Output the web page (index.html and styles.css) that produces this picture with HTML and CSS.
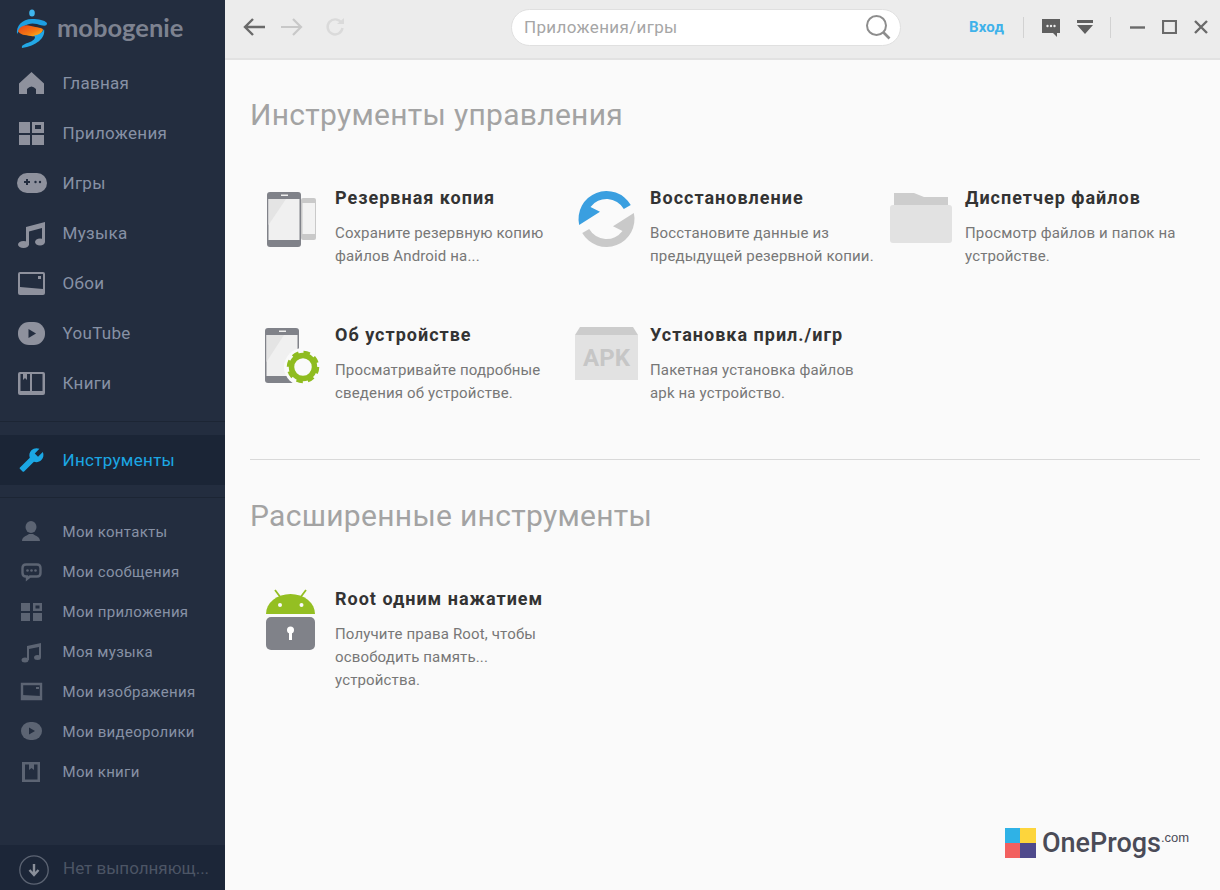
FILE: index.html
```html
<!DOCTYPE html>
<html lang="ru">
<head>
    <meta charset="UTF-8">
    <title>Mobogenie</title>
    <link rel="stylesheet" href="styles.css">
</head>
<body>
<div class="app">
    <aside class="sidebar">
        <div class="logo">
            <svg class="logo-mark" width="34" height="42" viewBox="0 0 34 42">
                <defs>
                    <linearGradient id="fire" x1="0" y1="0" x2="1" y2="1">
                        <stop offset="0" stop-color="#e8401c"/>
                        <stop offset="0.6" stop-color="#f57a12"/>
                        <stop offset="1" stop-color="#fbc31c"/>
                    </linearGradient>
                </defs>
                <ellipse cx="16" cy="5" rx="2.800" ry="3.600" fill="#3fb6ee"/>
                <path d="M1 26C0 18 6 11 16 11 23 11 28 12 31 15 31 19 27 18 21 16 13 14 7 17 1 26Z" fill="#1d9fe2"/>
                <path d="M2 23C4 18 9 16 15 18 21 20 27 19 27 22 25 27 20 29 15 28 9 27 4 27 2 23Z" fill="url(#fire)"/>
                <path d="M6 40C5 37 9 36 14 34 19 32 20 29 18 27.500 23 27 27 24 28 21 30 30 20 38 6 40Z" fill="#23a8e6"/>
            </svg>
            <span class="logo-text">mobogenie</span>
        </div>

        <nav class="nav">
            <a class="nav-item">
                <svg class="nav-icon" viewBox="0 0 30 30"><path d="M14.500 4 27 15.500V26H19V21Q14.500 16 10 21V26H2V15.500Z"/></svg>
                Главная
            </a>
            <a class="nav-item">
                <svg class="nav-icon" viewBox="0 0 30 30"><path d="M2 4H13V15H2ZM2 17H13V27H2ZM15 17H27V27H15Z"/><path fill-rule="evenodd" d="M15 4H27V15H15ZM18 7V11H24V7Z"/></svg>
                Приложения
            </a>
            <a class="nav-item">
                <svg class="nav-icon" viewBox="0 0 30 30"><rect y="5" width="30" height="20" rx="10"/><path class="cut" d="M7 13H9V11H11V13H13V15H11V17H9V15H7Z"/><circle class="cut" cx="18.500" cy="14" r="1.200"/><circle class="cut" cx="23" cy="14" r="1.200"/></svg>
                Игры
            </a>
            <a class="nav-item">
                <svg class="nav-icon" viewBox="0 0 30 30"><path d="M9 9 28 4V24H25V10L12 13.500V27H9Z"/><ellipse cx="6.500" cy="26.500" rx="5.500" ry="3.500"/><ellipse cx="23" cy="24" rx="5" ry="3.500"/></svg>
                Музыка
            </a>
            <a class="nav-item">
                <svg class="nav-icon" viewBox="0 0 30 30"><rect x="1" y="4" width="27" height="23" rx="2"/><path class="cut" d="M3 6H26V21L3 19Z"/><rect x="21" y="8" width="3" height="3"/></svg>
                Обои
            </a>
            <a class="nav-item">
                <svg class="nav-icon" viewBox="0 0 30 30"><rect x="1" y="4" width="27" height="23" rx="11"/><path class="cut" d="M11.500 11 19 15.500 11.500 20Z"/></svg>
                YouTube
            </a>
            <a class="nav-item">
                <svg class="nav-icon" viewBox="0 0 30 30"><rect x="1" y="4" width="27" height="23" rx="2"/><path class="cut" d="M3.500 6H6V12L8 10 10 12V6H13V23H3.500ZM15 6H25.500V23H15Z"/></svg>
                Книги
            </a>
        </nav>

        <div class="active-wrap">
            <a class="nav-item nav-item-active">
                <svg class="nav-icon" viewBox="0 0 30 30"><path transform="translate(27.500 2) scale(-1.08 1.08)" d="M22.700 19l-9.100-9.100c.9-2.300.4-5-1.500-6.900-2-2-5-2.400-7.400-1.300L9 6 6 9 1.600 4.700C.4 7.100.9 10.100 2.900 12.100c1.900 1.900 4.600 2.400 6.900 1.500l9.100 9.100c.4.4 1 .4 1.400 0l2.300-2.300c.5-.4.5-1.100.1-1.400z"/></svg>
                Инструменты
            </a>
        </div>

        <nav class="subnav">
            <a class="sub-item">
                <svg class="sub-icon" viewBox="0 0 30 30"><ellipse cx="14" cy="11" rx="5.500" ry="6"/><path d="M5 25C5 21 9 20 12 18H16C19 20 23 21 23 25Z"/></svg>
                Мои контакты
            </a>
            <a class="sub-item">
                <svg class="sub-icon" viewBox="0 0 30 30"><path class="line" d="M9 8.500H20Q23.500 8.500 23.500 12V17Q23.500 20.500 20 20.500H13L10 23V20.500H9Q5.500 20.500 5.500 17V12Q5.500 8.500 9 8.500Z"/><circle cx="10.500" cy="14.500" r="1.300"/><circle cx="14.500" cy="14.500" r="1.300"/><circle cx="18.500" cy="14.500" r="1.300"/></svg>
                Мои сообщения
            </a>
            <a class="sub-item">
                <svg class="sub-icon" viewBox="0 0 30 30"><path d="M4 7H13V15H4ZM4 17H13V25H4ZM16 17H25V25H16Z"/><path fill-rule="evenodd" d="M16 7H25V15H16ZM18.500 9.500V12.500H22.500V9.500Z"/></svg>
                Мои приложения
            </a>
            <a class="sub-item">
                <svg class="sub-icon" viewBox="0 0 30 30"><path d="M10 10 24 7V21H22V11L12 13V24H10Z"/><ellipse cx="8" cy="24" rx="3.500" ry="2.500"/><ellipse cx="20.500" cy="21.500" rx="3.500" ry="2.500"/></svg>
                Моя музыка
            </a>
            <a class="sub-item">
                <svg class="sub-icon" viewBox="0 0 30 30"><path class="line" d="M5 8H24V23H5Z"/><path d="M5 19 24 20V23H5ZM19 11H22V13H19Z"/></svg>
                Мои изображения
            </a>
            <a class="sub-item">
                <svg class="sub-icon" viewBox="0 0 30 30"><rect x="4" y="6" width="21" height="18" rx="9"/><path class="cut" d="M12 11.500 18 15 12 18.500Z"/></svg>
                Мои видеоролики
            </a>
            <a class="sub-item">
                <svg class="sub-icon" viewBox="0 0 30 30"><path fill-rule="evenodd" d="M5 6H23V26H5ZM8 8.500V23.500H20.500V8.500H17V14L14.500 12 12 14V8.500Z"/></svg>
                Мои книги
            </a>
        </nav>

        <div class="tasks">
            <svg class="tasks-icon" width="30" height="30" viewBox="0 0 30 30">
                <circle cx="15" cy="15" r="14.200" fill="none" stroke="#5c6473" stroke-width="1.300"/>
                <path d="M15 9V19M10.500 15 15 20 19.500 15" fill="none" stroke="#8a8f9a" stroke-width="2.400"/>
            </svg>
            <span class="tasks-text">Нет выполняющ...</span>
        </div>
    </aside>

    <main class="main">
        <header class="toolbar">
            <svg class="tb-icon" width="22" height="20" viewBox="0 0 22 20"><path d="M22 10H2M10 2 2 10 10 18" fill="none" stroke="#6a6a6a" stroke-width="2.400"/></svg>
            <svg class="tb-icon tb-forward" width="22" height="20" viewBox="0 0 22 20"><path d="M0 10H20M12 2 20 10 12 18" fill="none" stroke="#c8c8c8" stroke-width="2.200"/></svg>
            <svg class="tb-icon tb-reload" width="20" height="20" viewBox="0 0 20 20"><path d="M16.500 6A7.500 7.500 0 1 0 17.500 11" fill="none" stroke="#dadada" stroke-width="2.400"/><path d="M12 7H19V1Z" fill="#dadada"/></svg>

            <div class="search">
                <span class="search-text">Приложения/игры</span>
                <svg width="26" height="26" viewBox="0 0 26 26"><circle cx="11.500" cy="11.500" r="9.500" fill="none" stroke="#8d8d8d" stroke-width="2"/><path d="M18.500 18.500 24.500 24.500" stroke="#8d8d8d" stroke-width="2.600"/></svg>
            </div>

            <a class="login">Вход</a>
            <span class="tb-sep"></span>
            <svg class="tb-chat" width="18" height="19" viewBox="0 0 18 19"><path d="M0 1H18V15H15V19L11 15H0Z" fill="#5f5f5f"/><circle cx="5.500" cy="8" r="1.200" fill="#eee"/><circle cx="9" cy="8" r="1.200" fill="#eee"/><circle cx="12.500" cy="8" r="1.200" fill="#eee"/></svg>
            <svg class="tb-menu" width="16" height="14" viewBox="0 0 16 14"><path d="M0 0H16V3H0ZM0 5H16L8 14Z" fill="#5f5f5f"/></svg>
            <span class="tb-sep tb-sep-2"></span>
            <svg class="tb-min" width="15" height="15" viewBox="0 0 15 15"><path d="M0 7.500H15" stroke="#6a6a6a" stroke-width="2.400"/></svg>
            <svg class="tb-max" width="15" height="14" viewBox="0 0 15 14"><path d="M1 1H14V13H1Z" fill="none" stroke="#6a6a6a" stroke-width="2.200"/></svg>
            <svg class="tb-close" width="14" height="14" viewBox="0 0 14 14"><path d="M1 1 13 13M13 1 1 13" stroke="#6a6a6a" stroke-width="2.400"/></svg>
        </header>

        <section class="section section-first">
            <h1 class="section-title">Инструменты управления</h1>
            <div class="tools">
                <div class="tool">
                    <svg class="tool-icon" viewBox="0 0 85 70">
                        <rect x="51" y="13" width="15" height="42" rx="2" fill="#c9c9c9"/>
                        <rect x="52.500" y="18" width="12.500" height="31" fill="#f2f2f2"/>
                        <rect x="17" y="7" width="34" height="55" rx="3" fill="#808289"/>
                        <path d="M18.500 14H49.500V55H18.500Z" fill="#f0f0f0"/>
                        <path d="M18.500 14H36L18.500 40Z" fill="#e4e4e4"/>
                        <rect x="31" y="9.500" width="7" height="1.500" fill="#eee"/>
                    </svg>
                    <div class="tool-body">
                        <h3 class="tool-name">Резервная копия</h3>
                        <p class="tool-desc">Сохраните резервную копию файлов Android на...</p>
                    </div>
                </div>
                <div class="tool">
                    <svg class="tool-icon" viewBox="0 0 85 70">
                        <path d="M14.150 40A28 28 0 0 1 65.750 20L58.800 24A20 20 0 0 0 25.500 22L35 26.700Z" fill="#3a9fe0"/>
                        <path d="M68.850 28A28 28 0 0 1 17.250 48L24.200 44A20 20 0 0 0 57.500 46L48 41.300Z" fill="#c9c9c9"/>
                    </svg>
                    <div class="tool-body">
                        <h3 class="tool-name">Восстановление</h3>
                        <p class="tool-desc">Восстановите данные из предыдущей резервной копии.</p>
                    </div>
                </div>
                <div class="tool">
                    <svg class="tool-icon" viewBox="0 0 85 70">
                        <path d="M14 8H34L44 12H68V22H14Z" fill="#cdcdcd"/>
                        <rect x="10" y="20" width="62" height="38" rx="3" fill="#e2e2e2"/>
                    </svg>
                    <div class="tool-body">
                        <h3 class="tool-name">Диспетчер файлов</h3>
                        <p class="tool-desc">Просмотр файлов и папок на устройстве.</p>
                    </div>
                </div>
                <div class="tool">
                    <svg class="tool-icon" viewBox="0 0 85 70">
                        <rect x="15" y="6" width="34" height="55" rx="3" fill="#808289"/>
                        <path d="M16.500 13H47.500V54H16.500Z" fill="#f0f0f0"/>
                        <path d="M16.500 13H34L16.500 40Z" fill="#e4e4e4"/>
                        <rect x="29" y="8.500" width="7" height="1.500" fill="#eee"/>
                        <circle cx="53" cy="45" r="19" fill="#fafafa"/>
                        <circle cx="53" cy="45" r="11.500" fill="none" stroke="#8fbc1f" stroke-width="5.500"/>
                        <circle cx="53" cy="45" r="14.500" fill="none" stroke="#8fbc1f" stroke-width="3.500" stroke-dasharray="6.400 5"/>
                    </svg>
                    <div class="tool-body">
                        <h3 class="tool-name">Об устройстве</h3>
                        <p class="tool-desc">Просматривайте подробные сведения об устройстве.</p>
                    </div>
                </div>
                <div class="tool">
                    <svg class="tool-icon" viewBox="0 0 85 70">
                        <path d="M15 5H68L73 13H10Z" fill="#cccccc"/>
                        <rect x="10" y="13" width="63" height="45" fill="#e2e2e2"/>
                        <text class="apk" x="41.500" y="44" text-anchor="middle">APK</text>
                    </svg>
                    <div class="tool-body">
                        <h3 class="tool-name">Установка прил./игр</h3>
                        <p class="tool-desc">Пакетная установка файлов apk на устройство.</p>
                    </div>
                </div>
            </div>
        </section>

        <section class="section">
            <h1 class="section-title">Расширенные инструменты</h1>
            <div class="tools">
                <div class="tool">
                    <svg class="tool-icon" viewBox="0 0 85 70">
                        <path d="M25 4 31 12M56 4 50 12" stroke="#94bf22" stroke-width="1.800"/>
                        <path d="M16 28A24.500 20 0 0 1 65 28Z" fill="#94bf22"/>
                        <circle cx="30" cy="19" r="2" fill="#fafafa"/>
                        <circle cx="51.500" cy="19" r="2" fill="#fafafa"/>
                        <rect x="16" y="31" width="49" height="33" rx="5" fill="#808289"/>
                        <circle cx="40.500" cy="44" r="3.500" fill="#fff"/>
                        <path d="M39 45H42V54H39Z" fill="#fff"/>
                    </svg>
                    <div class="tool-body">
                        <h3 class="tool-name">Root одним нажатием</h3>
                        <p class="tool-desc">Получите права Root, чтобы освободить память... устройства.</p>
                    </div>
                </div>
            </div>
        </section>

        <div class="watermark">
            <div class="wm-squares">
                <span class="wm-blue"></span>
                <span class="wm-yellow"></span>
                <span class="wm-red"></span>
                <span class="wm-indigo"></span>
            </div>
            <span class="wm-text">OneProgs</span><span class="wm-com">.com</span>
        </div>
    </main>
</div>
</body>
</html>
```

FILE: styles.css
```css
* {
    box-sizing: border-box;
}
html, body {
    margin: 0;
    height: 100%;
    overflow: hidden;
}
body {
    font-family: Roboto, "Liberation Sans", sans-serif;
    background: #fafafa;
}
h1, h3, p {
    margin: 0;
    font-weight: normal;
}
.app {
    display: flex;
    width: 1220px;
    height: 890px;
}

/* sidebar */
.sidebar {
    width: 225px;
    flex: none;
    display: flex;
    flex-direction: column;
    background: #232d3f;
}
.logo {
    height: 58px;
    display: flex;
    align-items: center;
    padding-left: 16px;
}
.logo-text {
    font-family: Lato, "Open Sans", sans-serif;
    font-size: 25.500px;
    font-weight: 700;
    margin-left: 7px;
    margin-top: -4px;
    color: #7d8290;
}
.nav-item {
    height: 50px;
    display: flex;
    align-items: center;
    padding-left: 17px;
    font-size: 17px;
    letter-spacing: 0.3px;
    color: #8791a5;
}
.nav-icon {
    width: 30px;
    height: 30px;
    margin-right: 15.500px;
    fill: #8e919d;
    flex: none;
}
.nav-icon .cut {
    fill: #232d3f;
}
.active-wrap {
    margin-top: 13px;
    padding: 13px 0 12px;
    border-top: 1px solid #1c2534;
    border-bottom: 1px solid #1c2534;
}
.nav-item-active {
    background: #1b2536;
    color: #1ba7e4;
}
.nav-item-active .nav-icon {
    fill: #1ba7e4;
}
.subnav {
    margin-top: 14px;
}
.sub-item {
    height: 40px;
    display: flex;
    align-items: center;
    padding-left: 17px;
    font-size: 15px;
    letter-spacing: 0.3px;
    color: #8791a5;
}
.sub-icon {
    width: 30px;
    height: 30px;
    margin: -2px 15.500px 0 0;
    fill: #5c6473;
    flex: none;
}
.sub-icon .cut {
    fill: #232d3f;
}
.sub-icon .line {
    fill: none;
    stroke: #5c6473;
    stroke-width: 2.400;
}
.tasks {
    margin-top: auto;
    height: 45px;
    background: #1c2638;
    display: flex;
    align-items: center;
    padding: 5px 0 0 19px;
}
.tasks-icon {
    flex: none;
    margin-right: 14px;
}
.tasks-text {
    font-size: 17px;
    color: #4c5565;
    margin-top: -5px;
    white-space: nowrap;
}

/* main area */
.main {
    flex: 1;
    position: relative;
    display: flex;
    flex-direction: column;
    background: #fafafa;
}
.toolbar {
    height: 60px;
    flex: none;
    display: flex;
    align-items: center;
    background: #ececec;
    border-bottom: 2px solid #e2e2e2;
    padding: 0 12px 4px 18px;
}
.tb-forward {
    margin-left: 16px;
}
.tb-reload {
    margin-left: 22px;
}
.search {
    width: 390px;
    height: 37px;
    margin-left: 166px;
    display: flex;
    align-items: center;
    justify-content: space-between;
    padding: 0 9px 0 12px;
    background: #fff;
    border: 1px solid #e0e0e0;
    border-radius: 19px;
}
.search-text {
    font-size: 17px;
    letter-spacing: 0.35px;
    color: #a6a6a6;
}
.login {
    margin-left: 68px;
    font-size: 15px;
    letter-spacing: 0.2px;
    font-weight: 700;
    color: #3fb2ea;
}
.tb-sep {
    width: 1px;
    height: 21px;
    background: #d2d2d2;
    margin-left: 19px;
}
.tb-chat {
    margin-left: 18px;
}
.tb-menu {
    margin-left: 17px;
}
.tb-sep-2 {
    margin-left: 17px;
}
.tb-min {
    margin-left: 19px;
}
.tb-max {
    margin-left: 17px;
}
.tb-close {
    margin-left: 17px;
}

.section {
    margin: 0 20px 0 25px;
    padding-top: 36px;
}
.section-first {
    padding-top: 35px;
    border-bottom: 1px solid #d9d9d9;
}
.section-title {
    font-size: 30px;
    line-height: 40px;
    color: #a3a3a3;
    letter-spacing: 0.3px;
}
.tools {
    margin-top: 50px;
    display: grid;
    grid-template-columns: repeat(3, 315px);
    grid-auto-rows: 137px;
}
.tool {
    display: flex;
}
.tool-icon {
    width: 85px;
    height: 70px;
    flex: none;
    overflow: visible;
}
.apk {
    font-family: Roboto, sans-serif;
    font-weight: 700;
    font-size: 24px;
    fill: #c6c6c6;
}
.tool-body {
    width: 228px;
}
.tool-name {
    font-size: 18px;
    line-height: 26px;
    font-weight: 700;
    color: #333;
    letter-spacing: 1px;
}
.tool-desc {
    margin-top: 11px;
    font-size: 15px;
    letter-spacing: 0.15px;
    line-height: 23px;
    color: #777;
}

/* watermark in the corner */
.watermark {
    position: absolute;
    right: 31px;
    bottom: 31px;
    display: flex;
    align-items: center;
}
.wm-squares {
    display: grid;
    grid-template-columns: 15px 16px;
    grid-auto-rows: 15px;
    margin-right: 6px;
}
.wm-blue {
    background: #2fb2e6;
}
.wm-yellow {
    background: #fdd53c;
}
.wm-red {
    background: #f2605f;
}
.wm-indigo {
    background: #4f4a8c;
}
.wm-text {
    font-size: 27px;
    font-weight: 500;
    color: #4a4b57;
}
.wm-com {
    font-family: "Liberation Sans", sans-serif;
    font-size: 13px;
    color: #4a4b57;
    margin-bottom: 12px;
}
```
